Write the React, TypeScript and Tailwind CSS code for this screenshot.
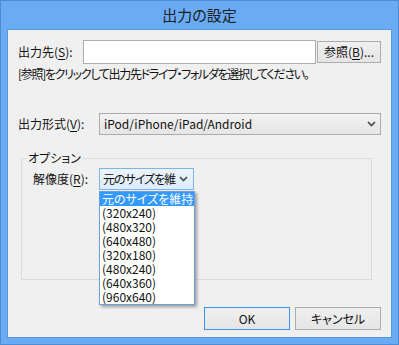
const font = "font-['Noto_Sans_CJK_JP','Noto_Sans',sans-serif] [font-feature-settings:'palt']";

function Chevron() {
  return (
    <svg width="9" height="6" viewBox="0 0 9 6" className="shrink-0">
      <path d="M1 1 L4.5 4.5 L8 1" fill="none" stroke="#4a4a4a" strokeWidth="1.7" />
    </svg>
  );
}

function Key({ k }: { k: string }) {
  return (
    <>
      (<span className="underline underline-offset-2">{k}</span>)
    </>
  );
}

const sizes = ['元のサイズを維持', '(320x240)', '(480x320)', '(640x480)', '(320x180)', '(480x240)', '(640x360)', '(960x640)'];

export default function App() {
  return (
    <div className={`flex h-[345px] w-[399px] flex-col border border-[#4f8ad6] bg-[#6aabf5] px-[6px] pb-[6px] text-[12px] leading-[16px] text-[#111] ${font}`}>
      <div className="flex h-[28px] shrink-0 items-center justify-center text-[15px] text-[#1e1e1e]">出力の設定</div>

      <div className="flex flex-1 flex-col border border-[#5a96de] bg-[#f0f0f0] pt-[10px]">
        {/* output path */}
        <div className="flex items-center pl-[10px]">
          <span className="w-[65px] shrink-0">
            出力先<Key k="S" />:
          </span>
          <div className="h-[24px] w-[233px] border border-[#abadb3] bg-white" />
          <button
            type="button"
            className="ml-[1px] h-[22px] w-[64px] border border-[#acacac] bg-[linear-gradient(#f0f0f0,#e5e5e5)] text-[12px] leading-[16px]"
          >
            参照<Key k="B" />...
          </button>
        </div>
        <p className="mt-[2px] whitespace-nowrap pl-[10px] tracking-[-1.3px]">[参照]をクリックして出力先ドライブ・フォルダを選択してください。</p>

        {/* format */}
        <div className="mt-[31px] flex items-center pl-[10px]">
          <span className="w-[81px] shrink-0">
            出力形式<Key k="V" />:
          </span>
          <div className="flex h-[22px] w-[282px] items-center justify-between border border-[#acacac] bg-[linear-gradient(#f2f2f2,#e5e5e5)] pl-[4px] pr-[4px]">
            <span>iPod/iPhone/iPad/Android</span>
            <Chevron />
          </div>
        </div>

        {/* options group */}
        <fieldset className="ml-[13px] mt-[15px] w-[351px] border border-[#dcdcdc] pb-[89px]">
          <legend className="ml-[4px] px-[2px]">オプション</legend>
          <div className="mt-[2px] flex items-center pl-[11px]">
            <span className="w-[66px] shrink-0">
              解像度<Key k="R" />:
            </span>
            <div className="relative">
              <div className="flex h-[22px] w-[95px] items-center border border-[#7eb4ea] bg-[linear-gradient(#ecf4fc,#dcecfc)] pl-[3px] pr-[5px]">
                <span className="w-[75px] overflow-hidden whitespace-nowrap tracking-[-1px]">元のサイズを維</span>
                <span className="ml-auto">
                  <Chevron />
                </span>
              </div>
              <ul className="absolute left-0 top-[23px] z-10 w-[96px] border border-[#6f9fd8] bg-white shadow-[2px_2px_3px_rgba(0,0,0,0.35)]">
                {sizes.map((s, i) => (
                  <li
                    key={s}
                    className={`h-[14px] whitespace-nowrap pl-[2px] leading-[14px] ${i === 0 ? 'bg-[#3399ff] text-white' : 'text-[#111]'}`}
                  >
                    {s}
                  </li>
                ))}
              </ul>
            </div>
          </div>
        </fieldset>

        {/* buttons */}
        <div className="mt-[27px] flex justify-end gap-[5px] pr-[10px]">
          <button type="button" className="h-[23px] w-[86px] border border-[#3c95ea] bg-[linear-gradient(#f0f0f0,#e5e5e5)]">
            OK
          </button>
          <button type="button" className="h-[23px] w-[86px] border border-[#acacac] bg-[linear-gradient(#f0f0f0,#e5e5e5)]">
            キャンセル
          </button>
        </div>
      </div>
    </div>
  );
}
